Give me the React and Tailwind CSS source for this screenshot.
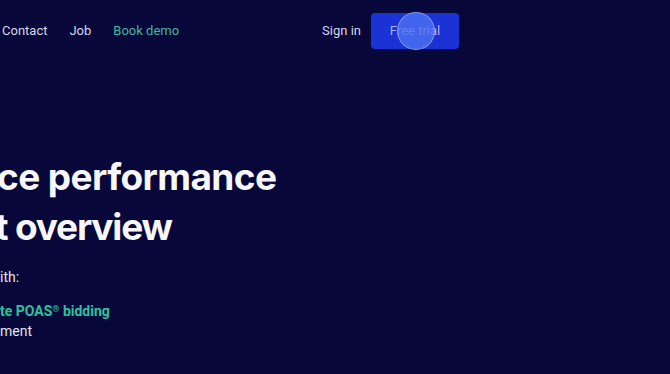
export default function App() {
  return (
    <div className="relative w-[670px] h-[374px] overflow-hidden bg-[#08073a] text-white font-['Inter',sans-serif]">
      {/* Top navigation */}
      <nav className="flex items-center h-[62px] pl-[2px] font-['Roboto',sans-serif]">
        <div className="flex items-center gap-[22px] text-[13px] text-[#d6d7e6]">
          <a>Contact</a>
          <a>Job</a>
          <a className="text-[#3fb8a0]">Book demo</a>
        </div>
        <div className="flex items-center ml-[143px] gap-[10px]">
          <a className="text-[13px] text-[#d6d7e6]">Sign in</a>
          <div className="relative">
            <button className="w-[88px] h-[36px] rounded-[4px] bg-[#1b33d4] text-[13px] text-[#aab6f4]">
              Free trial
            </button>
            {/* click highlight */}
            <span className="absolute left-[26px] top-[-1px] w-[38px] h-[38px] rounded-full bg-[#4d72f2]/80 border border-[#8aa6ff]/80"></span>
          </div>
        </div>
      </nav>

      {/* Hero */}
      <section className="mt-[90px] -ml-[3px]">
        <h1 className="text-[37px] leading-[50px] font-bold tracking-[-0.6px] text-[#f7f7fb]">
          <span className="block">ce performance</span>
          <span className="block -ml-[2px] tracking-[-1.2px]">t overview</span>
        </h1>
        <div className="ml-[3px] font-['Roboto',sans-serif]">
          <p className="mt-[15px] text-[14px] leading-[20px] text-[#e4e5ef]">ith:</p>
          <ul className="mt-[14px] text-[14px] leading-[20px]">
            <li className="font-bold text-[#2cc39b]">
              te POAS<sup className="text-[9px]">®</sup> bidding
            </li>
            <li className="text-[#e4e5ef]">ment</li>
          </ul>
        </div>
      </section>
    </div>
  );
}
